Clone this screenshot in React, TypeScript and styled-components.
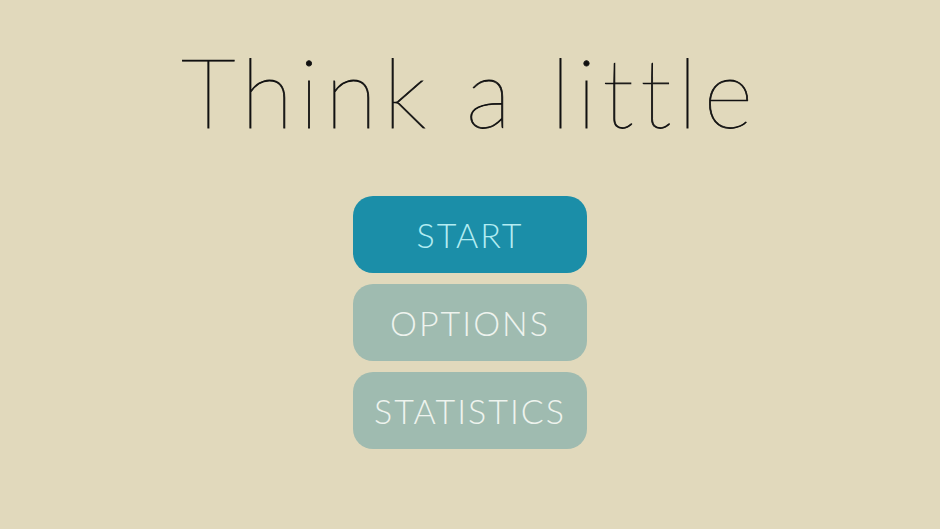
import React from "react";
import styled, { createGlobalStyle } from "styled-components";

const GlobalStyle = createGlobalStyle`
  html, body {
    margin: 0;
    padding: 0;
    background: #e1d9bc;
  }
  #root {
    height: 529px;
  }
`;

const Screen = styled.div`
  height: 529px;
  display: flex;
  flex-direction: column;
  align-items: center;
  background: #e1d9bc;
  font-family: Lato, "Open Sans", sans-serif;
`;

const Title = styled.h1`
  margin: 35px 0 0;
  font-size: 96px;
  font-weight: 100;
  line-height: 112px;
  letter-spacing: 6px;
  color: #111;
  -webkit-text-stroke: 0.8px #111;
`;

const Menu = styled.div`
  margin-top: 49px;
  display: flex;
  flex-direction: column;
  gap: 11px;
`;

const MenuButton = styled.button<{ $active?: boolean }>`
  width: 234px;
  height: 77px;
  border: none;
  border-radius: 20px;
  background: ${(p) => (p.$active ? "#1b8ea8" : "#9fbbb0")};
  color: ${(p) => (p.$active ? "#b2ecf2" : "#eef3ee")};
  font-family: Lato, "Open Sans", sans-serif;
  font-size: 34px;
  font-weight: 300;
  letter-spacing: 2px;
  cursor: pointer;
`;

export default function App() {
  return (
    <>
      <GlobalStyle />
      <Screen>
        <Title>Think a little</Title>
        <Menu>
          <MenuButton $active>START</MenuButton>
          <MenuButton>OPTIONS</MenuButton>
          <MenuButton>STATISTICS</MenuButton>
        </Menu>
      </Screen>
    </>
  );
}
